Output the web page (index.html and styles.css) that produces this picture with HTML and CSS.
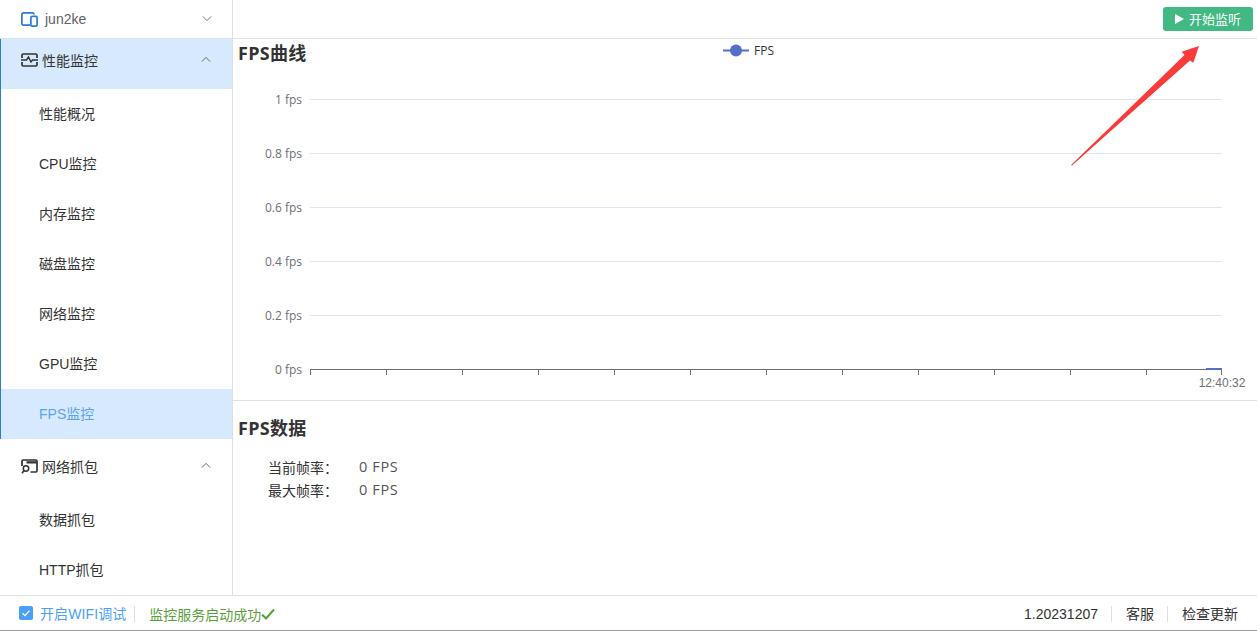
FILE: index.html
```html
<!DOCTYPE html>
<html lang="zh-CN">
<head>
<meta charset="utf-8">
<title>FPS监控</title>
<link rel="stylesheet" href="styles.css">
</head>
<body>
<div class="app">
  <div class="shell">
    <aside class="sidebar">
      <div class="device">
        <svg class="menu-icon" viewBox="0 0 17 15" width="17" height="15"><path d="M13 2.500V2.200A1.300 1.300 0 0 0 11.700 .9H2.200A1.300 1.300 0 0 0 .9 2.200V11.800A1.300 1.300 0 0 0 2.200 13.100H9" fill="none" stroke="#2b7cd3" stroke-width="1.700"/><rect x="9.900" y="4.400" width="6.200" height="9.700" rx="1.200" fill="none" stroke="#2b7cd3" stroke-width="1.700"/></svg>
        <span class="device-name">jun2ke</span>
        <svg class="chev" viewBox="0 0 12 8" width="10" height="7"><path d="M1 1.500l5 5 5-5" fill="none" stroke="#777" stroke-width="1.200"/></svg>
      </div>
      <div class="group-wrap">
        <div class="group-head active">
          <svg class="menu-icon" viewBox="0 0 17 14" width="17" height="14"><path d="M1 5V2.200A1.200 1.200 0 0 1 2.200 1H14.800A1.200 1.200 0 0 1 16 2.200V5M1 9v2.800A1.200 1.200 0 0 0 2.200 13H14.800A1.200 1.200 0 0 0 16 11.800V9" fill="none" stroke="#333" stroke-width="1.700"/><path d="M0 7h5.500l2-3 2.500 5 1.500-2h5.500" fill="none" stroke="#333" stroke-width="1.400"/></svg>
          <span>性能监控</span>
          <svg class="chev" viewBox="0 0 12 8" width="10" height="7"><path d="M1 6.500l5-5 5 5" fill="none" stroke="#666" stroke-width="1.200"/></svg>
        </div>
        <a class="item">性能概况</a>
        <a class="item">CPU监控</a>
        <a class="item">内存监控</a>
        <a class="item">磁盘监控</a>
        <a class="item">网络监控</a>
        <a class="item">GPU监控</a>
        <a class="item selected">FPS监控</a>
      </div>
      <div class="group-plain">
        <div class="group-head">
          <svg class="menu-icon" viewBox="0 0 17 15" width="17" height="15"><path d="M1 7V2.200A1.200 1.200 0 0 1 2.200 1H14.800A1.200 1.200 0 0 1 16 2.200V11.800A1.200 1.200 0 0 1 14.800 13H9.500" fill="none" stroke="#333" stroke-width="1.700"/><path d="M5.500 2.200h10v2.300h-10z" fill="#333"/><circle cx="5" cy="9.500" r="2.700" fill="none" stroke="#333" stroke-width="1.500"/><path d="M3 11.500L1 14.300" stroke="#333" stroke-width="1.600"/></svg>
          <span>网络抓包</span>
          <svg class="chev" viewBox="0 0 12 8" width="10" height="7"><path d="M1 6.500l5-5 5 5" fill="none" stroke="#666" stroke-width="1.200"/></svg>
        </div>
        <a class="item">数据抓包</a>
        <a class="item">HTTP抓包</a>
      </div>
    </aside>
    <main class="main">
      <div class="toolbar">
        <button class="start-btn" type="button">
          <svg viewBox="0 0 9 10" width="9" height="10"><path d="M0 0v10L9 5z" fill="#fff"/></svg>
          <span>开始监听</span>
        </button>
      </div>
      <section class="chart-section">
        <h2 class="title">FPS曲线</h2>
        <svg class="chart" viewBox="0 0 1024 361" width="1024" height="361">
          <g stroke="#e0e6f1" stroke-width="1">
            <path d="M77 60.500H989M77 114.500H989M77 168.500H989M77 222.500H989M77 276.500H989"/>
          </g>
          <path d="M490 11.500H516" stroke="#5470c6" stroke-width="2"/>
          <circle cx="503" cy="11.500" r="6" fill="#5470c6"/>
          <text class="legend" x="521" y="16">FPS</text>
          <g class="axis-labels">
            <text x="69" y="65">1 fps</text>
            <text x="69" y="119">0.8 fps</text>
            <text x="69" y="173">0.6 fps</text>
            <text x="69" y="227">0.4 fps</text>
            <text x="69" y="281">0.2 fps</text>
            <text x="69" y="335">0 fps</text>
          </g>
          <path d="M77 330.500H989M77.500 331v5M153.500 331v5M229.500 331v5M305.500 331v5M381.500 331v5M457.500 331v5M533.500 331v5M609.500 331v5M685.500 331v5M761.500 331v5M837.500 331v5M913.500 331v5M988.500 331v5" stroke="#6e7079" fill="none"/>
          <path d="M973 330H989" stroke="#5470c6" stroke-width="2"/>
          <text class="time-label" x="989" y="348">12:40:32</text>
        </svg>
      </section>
      <section class="data-section">
        <h2 class="title">FPS数据</h2>
        <dl class="stats">
          <div class="stat"><dt>当前帧率：</dt><dd>0 FPS</dd></div>
          <div class="stat"><dt>最大帧率：</dt><dd>0 FPS</dd></div>
        </dl>
      </section>
    </main>
  </div>
  <footer class="footer">
    <div class="footer-left">
      <label class="wifi">
        <span class="checkbox"><svg viewBox="0 0 14 14" width="14" height="14"><path d="M3.500 7.200l2.500 2.400 4.500-5" fill="none" stroke="#fff" stroke-width="1.300"/></svg></span>
        <span class="wifi-text">开启WIFI调试</span>
      </label>
      <span class="status">监控服务启动成功<svg viewBox="0 0 14 12" width="14" height="12"><path d="M1 6.500l4 4 8-9" fill="none" stroke="#5a9e3a" stroke-width="2"/></svg></span>
    </div>
    <div class="footer-right">
      <span class="f-cell">1.20231207</span>
      <span class="f-cell">客服</span>
      <span class="f-cell">检查更新</span>
    </div>
  </footer>
  <svg class="arrow" viewBox="0 0 130 122" width="130" height="122"><path d="M1 120L114.500 10L111.700 6.700L129 1L123.300 17.700L120 15.500L2 120.500Z" fill="#fb3a3a"/></svg>
</div>
</body>
</html>
```

FILE: styles.css
```css
* { box-sizing: border-box; }
html, body { margin: 0; padding: 0; }
body {
  background: #fff;
  color: #333;
  font-family: "Liberation Sans", "Noto Sans CJK SC", sans-serif;
  font-size: 14px;
  overflow: hidden;
}
.app {
  position: relative;
  width: 1257px;
  height: 631px;
  display: flex;
  flex-direction: column;
  border-bottom: 1px solid #9a9a9a;
}
.shell { flex: 1; min-height: 0; display: flex; }
.sidebar {
  width: 233px;
  flex: none;
  border-right: 1px solid #dcdfe6;
  overflow: hidden;
}
.device {
  height: 39px;
  display: flex;
  align-items: center;
  padding-left: 21px;
  border-bottom: 1px solid #dfe1ea;
}
.device-name { color: #606266; margin-left: 7px; }
.device .chev { margin-left: auto; margin-right: 20px; margin-top: -1px; }
.group-wrap { border-left: 1px solid #2b7cd3; }
.group-head {
  height: 50px;
  display: flex;
  align-items: center;
  padding-left: 21px;
  padding-bottom: 2px;
}
.group-wrap .group-head { padding-left: 20px; }
.group-head span { margin-left: 4px; }
.group-head .chev { margin-left: auto; margin-right: 21px; margin-top: -1px; }
.group-head.active { background: #d7e9fc; padding-bottom: 8px; }
.item {
  display: flex;
  align-items: center;
  height: 50px;
  padding-left: 39px;
  padding-bottom: 2px;
  color: #333;
}
.group-wrap .item { padding-left: 38px; }
.item.selected { background: #d7e9fc; color: #5aa2f5; }
.group-plain .group-head { height: 56px; }
.main { flex: 1; min-width: 0; display: flex; flex-direction: column; }
.toolbar {
  height: 39px;
  flex: none;
  display: flex;
  justify-content: flex-end;
  padding: 7px 4px 0 0;
  border-bottom: 1px solid #dfe1ea;
}
.start-btn {
  width: 90px;
  height: 24px;
  border: 0;
  border-radius: 3px;
  background: #42b883;
  color: #fff;
  font: 13px "Liberation Sans", "Noto Sans CJK SC", sans-serif;
  display: flex;
  align-items: center;
  justify-content: center;
  gap: 5px;
  padding: 0 0 1px;
}
.chart-section {
  height: 362px;
  flex: none;
  display: grid;
  border-bottom: 1px solid #dfe1ea;
}
.chart-section > * { grid-area: 1 / 1; }
.title {
  margin: 0;
  padding-left: 5px;
  font: bold 18px/30px "Open Sans", "Noto Sans CJK SC", sans-serif;
  letter-spacing: .3px;
  color: #333;
}
.chart-section .title { align-self: start; margin-top: -1px; }
.chart { display: block; }
.chart text { font-family: "Open Sans", "Noto Sans CJK SC", sans-serif; font-size: 12px; fill: #6e7079; }
.axis-labels text { text-anchor: end; }
.time-label { text-anchor: middle; font-family: "Liberation Sans", sans-serif !important; }
.chart .legend { fill: #333; }
.data-section { flex: 1; padding-top: 12px; }
.stats { margin: 12px 0 0; padding-left: 35px; font-family: "Open Sans", "Noto Sans CJK SC", sans-serif; }
.stat { display: flex; height: 23px; align-items: center; }
.stat dt { width: 91px; color: #333; }
.stat dd { margin: 0; color: #555; font-size: 14.5px; letter-spacing: .65px; }
.footer {
  height: 35px;
  flex: none;
  display: flex;
  align-items: center;
  justify-content: space-between;
  border-top: 1px solid #dfe1ea;
  padding-top: 2px;
}
.footer-left { display: flex; align-items: center; padding-left: 19px; }
.wifi { display: flex; align-items: center; gap: 7px; color: #4aa0f5; padding-right: 8px; border-right: 1px solid #dcdfe6; line-height: 16px; }
.wifi-text { letter-spacing: .1px; }
.checkbox { width: 14px; height: 14px; border-radius: 2px; background: #4aa0f5; display: block; margin-top: -2px; }
.checkbox svg { display: block; }
.status { display: flex; align-items: center; margin-left: 14px; color: #5a9e3a; }
.footer-right { display: flex; align-items: center; padding-right: 5px; }
.f-cell { padding: 0 14px; line-height: 16px; border-left: 1px solid #dcdfe6; color: #333; }
.f-cell:first-child { border-left: 0; padding-right: 13px; }
.f-cell:nth-child(2) { padding-right: 13px; }
.arrow { position: absolute; left: 1070px; top: 45px; }
```
